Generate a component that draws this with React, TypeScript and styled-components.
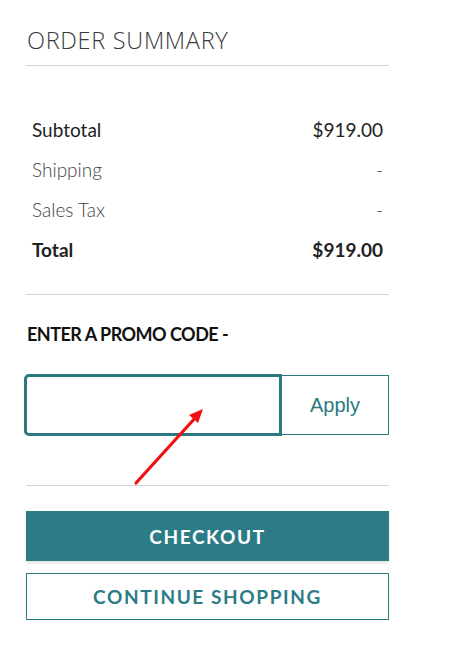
import { FC, ReactElement } from 'react';
import styled, { createGlobalStyle } from 'styled-components';

const rows = [
    { label: 'Subtotal', value: '$919.00', tone: 'medium' },
    { label: 'Shipping', value: '-', tone: 'light' },
    { label: 'Sales Tax', value: '-', tone: 'light' },
    { label: 'Total', value: '$919.00', tone: 'bold' }
];

const App: FC = (): ReactElement => {
    return (
        <>
            <Global />
            <Summary>
                <Title>ORDER SUMMARY</Title>
                <Totals>
                    {rows.map((row) => (
                        <Row key={row.label} $tone={row.tone}>
                            <span>{row.label}</span>
                            <span>{row.value}</span>
                        </Row>
                    ))}
                </Totals>
                <Promo>
                    <PromoLabel>ENTER A PROMO CODE -</PromoLabel>
                    <PromoForm>
                        <PromoInput type="text" />
                        <Apply>Apply</Apply>
                    </PromoForm>
                    <Arrow width="80" height="84" viewBox="0 0 80 84">
                        <line x1="6" y1="78" x2="66" y2="12" stroke="#f01010" strokeWidth="3.2" strokeLinecap="round" />
                        <polygon points="73,4 59,10 68,18" fill="#f01010" />
                    </Arrow>
                </Promo>
                <Actions>
                    <Checkout>CHECKOUT</Checkout>
                    <Continue>CONTINUE SHOPPING</Continue>
                </Actions>
            </Summary>
        </>
    );
};

const Global = createGlobalStyle`
    html, body {
        margin: 0;
        padding: 0;
        background: #fff;
    }
    * {
        box-sizing: border-box;
    }
`;

const Summary = styled.div`
    width: 363px;
    margin-left: 26px;
    padding-top: 24px;
    font-family: Lato, 'Liberation Sans', sans-serif;
`;

const Title = styled.h2`
    margin: 0;
    padding-bottom: 8px;
    border-bottom: 1px solid #d4d4d4;
    font-family: 'Open Sans', sans-serif;
    font-weight: 300;
    font-size: 23.5px;
    line-height: 33px;
    color: #3a3a3a;
    letter-spacing: 0.7px;
    padding-left: 1px;
`;

const Totals = styled.div`
    padding: 44px 6px 24px 6px;
    border-bottom: 1px solid #d4d4d4;
`;

const Row = styled.div<{ $tone: string }>`
    display: flex;
    justify-content: space-between;
    height: 40px;
    line-height: 40px;
    font-size: 19px;
    color: ${({ $tone }) => ($tone === 'light' ? '#444' : '#222')};
    font-weight: ${({ $tone }) => ($tone === 'bold' ? 700 : $tone === 'light' ? 300 : 400)};
`;

const Promo = styled.div`
    position: relative;
    padding: 29px 0 49px;
    border-bottom: 1px solid #d4d4d4;
`;

const PromoLabel = styled.div`
    font-size: 18px;
    line-height: 20px;
    font-weight: 700;
    color: #111;
    letter-spacing: -0.5px;
    padding-left: 1px;
`;

const PromoForm = styled.div`
    display: flex;
    align-items: center;
    margin-top: 30px;
    margin-left: -2px;
`;

const PromoInput = styled.input`
    width: 258px;
    height: 62px;
    border: 3px solid #2b7a82;
    border-radius: 5px 0 0 5px;
    outline: none;
    background: #fff;
    padding: 0 12px;
    font-size: 18px;
`;

const Apply = styled.button`
    width: 107px;
    height: 60px;
    border: 1px solid #2b7a82;
    border-left: none;
    background: #fff;
    color: #2b7a82;
    font-family: 'Liberation Sans', Arial, sans-serif;
    font-size: 20px;
    cursor: pointer;
`;

const Arrow = styled.svg`
    position: absolute;
    left: 104px;
    top: 110px;
`;

const Actions = styled.div`
    display: flex;
    flex-direction: column;
    gap: 12px;
    padding-top: 25px;
`;

const Checkout = styled.button`
    height: 50px;
    border: none;
    background: #2b7c86;
    color: #fff;
    font-family: Lato, sans-serif;
    font-weight: 700;
    font-size: 19px;
    letter-spacing: 1.6px;
    box-shadow: 0 2px 3px rgba(0, 0, 0, 0.12);
    cursor: pointer;
`;

const Continue = styled.button`
    height: 47px;
    border: 1px solid #2b7c86;
    background: #fff;
    color: #2b7c86;
    font-family: Lato, sans-serif;
    font-weight: 700;
    font-size: 19px;
    letter-spacing: 1.6px;
    box-shadow: 0 2px 3px rgba(0, 0, 0, 0.1);
    cursor: pointer;
`;

export default App;
